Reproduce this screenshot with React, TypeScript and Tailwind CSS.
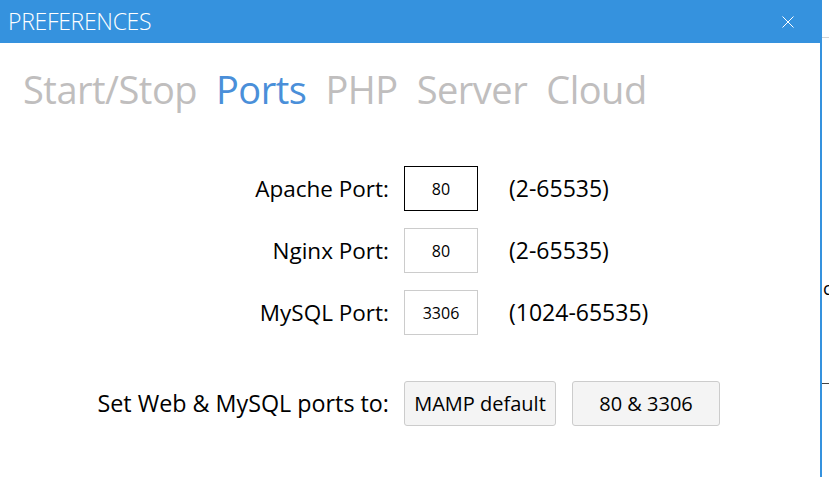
import { useState } from "react";

const tabs = ["Start/Stop", "Ports", "PHP", "Server", "Cloud"];

const ports = [
  { label: "Apache Port:", value: "80", range: "(2-65535)" },
  { label: "Nginx Port:", value: "80", range: "(2-65535)" },
  { label: "MySQL Port:", value: "3306", range: "(1024-65535)" },
];

export default function App() {
  const [active] = useState("Ports");

  return (
    <div
      className="flex h-[477px] w-[829px] overflow-hidden bg-white text-black"
      style={{ fontFamily: '"Open Sans", "Noto Sans", sans-serif' }}
    >
      {/* Preferences window */}
      <div className="flex w-[822px] shrink-0 flex-col border-r-2 border-[#3592de]">
        <div className="flex h-[43px] items-center justify-between bg-[#3592de] pl-[8px] pr-[26px]">
          <span className="text-[23px] font-light tracking-[-0.3px] text-white">PREFERENCES</span>
          <svg width="12" height="12" viewBox="0 0 12 12" className="text-white">
            <path d="M0.5 0.5 L11.5 11.5 M11.5 0.5 L0.5 11.5" stroke="currentColor" strokeWidth="1" fill="none" />
          </svg>
        </div>

        <div className="flex gap-[19px] pl-[23px] pt-[20px]">
          {tabs.map((t) => (
            <span
              key={t}
              className={`text-[38px] leading-[52px] tracking-[-0.5px] ${
                t === active ? "text-[#4a8fd9]" : "text-[#c0bebe]"
              }`}
            >
              {t}
            </span>
          ))}
        </div>

        <div className="mt-[51px] grid grid-cols-[389px_89px_1fr] gap-y-[17px]">
          {ports.map((p, i) => (
            <div key={p.label} className="contents">
              <div className="flex h-[45px] items-center justify-end text-[22.5px]">{p.label}</div>
              <div
                className={`ml-[15px] flex h-[45px] w-[74px] items-center justify-center border text-[16px] ${
                  i === 0 ? "border-black" : "border-[#cccccc]"
                }`}
              >
                {p.value}
              </div>
              <div className="ml-[31px] flex h-[45px] items-center text-[23px]">{p.range}</div>
            </div>
          ))}
        </div>

        <div className="mt-[46px] flex items-center">
          <div className="w-[389px] text-right text-[23.3px]">Set Web &amp; MySQL ports to:</div>
          <button className="ml-[15px] h-[45px] w-[152px] rounded-[3px] border border-[#cccccc] bg-[#f4f4f4] text-[20px]">
            MAMP default
          </button>
          <button className="ml-[16px] h-[45px] w-[148px] rounded-[3px] border border-[#cccccc] bg-[#f4f4f4] text-[20px]">
            80 &amp; 3306
          </button>
        </div>
      </div>

      {/* Sliver of the window behind */}
      <div className="flex flex-1 flex-col">
        <div className="mt-[37px] h-px bg-[#d4d4d4]" />
        <div className="mt-[242px] pl-[1px] text-[18px] leading-[16px] text-black">c</div>
        <div className="mt-[87px] h-px bg-[#444]" />
      </div>
    </div>
  );
}
